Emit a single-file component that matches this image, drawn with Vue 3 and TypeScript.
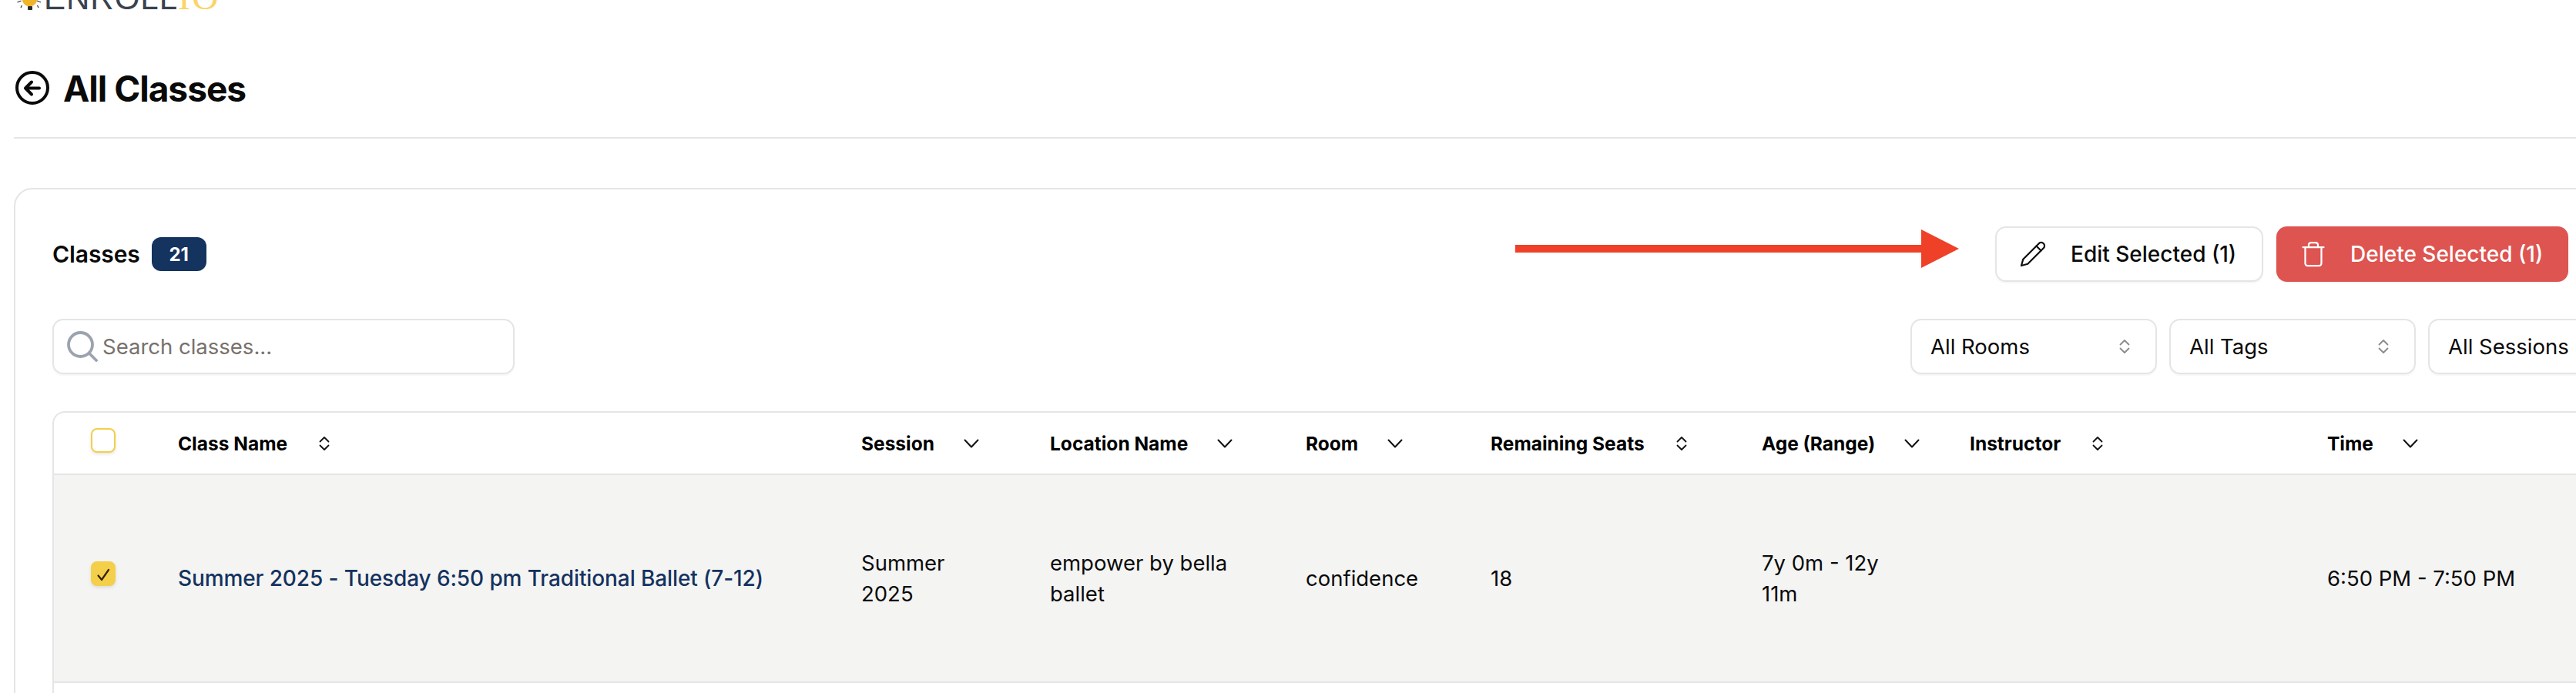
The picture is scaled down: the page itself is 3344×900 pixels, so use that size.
<script setup lang="ts">
interface Column {
  label: string
  sort: 'both' | 'down'
  width: number
}

const columns: Column[] = [
  { label: 'Class Name', sort: 'both', width: 887 },
  { label: 'Session', sort: 'down', width: 245 },
  { label: 'Location Name', sort: 'down', width: 332 },
  { label: 'Room', sort: 'down', width: 240 },
  { label: 'Remaining Seats', sort: 'both', width: 352 },
  { label: 'Age (Range)', sort: 'down', width: 270 },
  { label: 'Instructor', sort: 'both', width: 464 },
  { label: 'Time', sort: 'down', width: 300 },
]

const row = [
  'Summer 2025 - Tuesday 6:50 pm Traditional Ballet (7-12)',
  'Summer 2025',
  'empower by bella ballet',
  'confidence',
  '18',
  '7y 0m - 12y 11m',
  '',
  '6:50 PM - 7:50 PM',
]

const filters = ['All Rooms', 'All Tags', 'All Sessions']
</script>

<template>
  <div class="page">
    <div class="logo">
      <svg class="bulb" width="32" height="14" viewBox="0 0 32 14">
        <path d="M7 0h19c0 3-3 7-7 8h-5C10 7 7 3 7 0z" fill="#f0b429" />
        <path d="M0.500 3l5-2M31 3l-5-2M5 10l1.500-3M28 10l-1.500-3" stroke="#333" stroke-width="1.200" fill="none" />
        <rect x="14" y="8" width="6" height="5" rx="1" fill="#2c2c2c" />
      </svg>
      <span class="logo-text">ENROLL<span class="logo-accent">IO</span></span>
    </div>

    <header class="title-row">
      <svg class="back" width="44" height="44" viewBox="0 0 44 44" fill="none" stroke="#0a0a0a" stroke-width="4" stroke-linecap="round" stroke-linejoin="round">
        <circle cx="22" cy="22" r="20" />
        <path d="M21 14.500L13 22.500l8 8M13.500 22.500h17.500" />
      </svg>
      <h1>All Classes</h1>
    </header>

    <svg class="arrow" width="576" height="50" viewBox="0 0 576 50">
      <rect x="0" y="20" width="528" height="10" fill="#ee4127" />
      <polygon points="527,0 576,25 527,50" fill="#ee4127" />
    </svg>

    <main class="card">
      <div class="card-head">
        <div class="card-title">
          <span class="name">Classes</span>
          <span class="badge">21</span>
        </div>
        <div class="actions">
          <button class="btn edit">
            <svg width="36" height="36" viewBox="0 0 24 24" fill="none" stroke="#111" stroke-width="1.500" stroke-linejoin="round" stroke-linecap="round">
              <path d="M17 3a2.850 2.830 0 1 1 4 4L7.500 20.500 2 22l1.500-5.500Z" />
              <path d="m15 5 4 4" />
            </svg>
            <span>Edit Selected (1)</span>
          </button>
          <button class="btn del">
            <svg width="36" height="36" viewBox="0 0 24 24" fill="none" stroke="#fff" stroke-width="1.500" stroke-linejoin="round" stroke-linecap="round">
              <path d="M3 6h18M19 6v14a2 2 0 0 1-2 2H7a2 2 0 0 1-2-2V6M8 6V4a2 2 0 0 1 2-2h4a2 2 0 0 1 2 2v2" />
            </svg>
            <span>Delete Selected (1)</span>
          </button>
        </div>
      </div>

      <div class="filters-row">
        <label class="search">
          <svg width="40" height="40" viewBox="0 0 40 40" fill="none" stroke="#9ca3af" stroke-width="3.800" stroke-linecap="round">
            <circle cx="17.500" cy="17.500" r="15.500" />
            <path d="M29 29l9 9" />
          </svg>
          <input type="text" placeholder="Search classes..." />
        </label>
        <div class="filters">
          <div v-for="f in filters" :key="f" class="select">
            <span>{{ f }}</span>
            <svg width="14" height="22" viewBox="0 0 14 22" fill="none" stroke="#8a8a8a" stroke-width="1.800" stroke-linecap="round" stroke-linejoin="round">
              <path d="M1.500 8.500L7 3l5.500 5.500M1.500 13.500L7 19l5.500-5.500" />
            </svg>
          </div>
        </div>
      </div>

      <div class="table">
        <div class="tr head">
          <div class="check-cell"><span class="check"></span></div>
          <div v-for="c in columns" :key="c.label" class="th" :style="{ width: c.width + 'px' }">
            <span>{{ c.label }}</span>
            <svg v-if="c.sort === 'both'" class="sort-both" width="14" height="22" viewBox="0 0 14 22" fill="none" stroke="#111" stroke-width="1.800" stroke-linecap="round" stroke-linejoin="round">
              <path d="M1.500 8.500L7 3l5.500 5.500M1.500 13.500L7 19l5.500-5.500" />
            </svg>
            <svg v-else class="sort-down" width="22" height="14" viewBox="0 0 22 14" fill="none" stroke="#111" stroke-width="2" stroke-linecap="round" stroke-linejoin="round">
              <path d="M2.500 2.500l8.500 9 8.500-9" />
            </svg>
          </div>
        </div>
        <div class="tr body">
          <div class="check-cell">
            <span class="check on">
              <svg width="20" height="20" viewBox="0 0 20 20" fill="none" stroke="#33210d" stroke-width="2.200" stroke-linecap="round" stroke-linejoin="round">
                <path d="M3.500 12.500L8 18 17 5" />
              </svg>
            </span>
          </div>
          <div v-for="(cell, i) in row" :key="i" class="td" :class="{ link: i === 0 }" :style="{ width: columns[i].width + 'px' }">
            <span class="cell-text" :class="'cell-' + i">{{ cell }}</span>
          </div>
        </div>
        <div class="rest"></div>
      </div>
    </main>
  </div>
</template>

<style>
html, body { margin: 0; background: #fff; overflow: hidden; }
</style>

<style scoped>
.page {
  position: relative;
  width: 3344px;
  height: 900px;
  overflow: hidden;
  box-sizing: border-box;
  padding-left: 18px;
  font-family: Inter, "Liberation Sans", sans-serif;
  color: #0a0a0a;
  background: #fff;
}
.logo {
  height: 14px;
  display: flex;
  align-items: flex-end;
  overflow: hidden;
  padding-left: 4px;
  gap: 3px;
}
.bulb { flex: none; }
.logo-text {
  font-family: "Liberation Sans", sans-serif;
  font-size: 42px;
  line-height: 42px;
  letter-spacing: 1px;
  color: #39424e;
  white-space: nowrap;
  margin-bottom: -5px;
}
.logo-accent {
  color: #fbd468;
  font-family: "Liberation Serif", serif;
  font-size: 48px;
  letter-spacing: 2px;
}
.title-row {
  margin-top: 78px;
  height: 86px;
  display: flex;
  align-items: flex-start;
  gap: 18px;
  padding-left: 2px;
  border-bottom: 2px solid #e5e5e5;
}
.back { flex: none; }
.title-row h1 {
  margin: -2px 0 0;
  font-size: 46px;
  line-height: 50px;
  font-weight: 700;
  letter-spacing: -1px;
}
.arrow {
  position: absolute;
  left: 1967px;
  top: 298px;
}
.card {
  margin-top: 64px;
  width: 3400px;
  height: 800px;
  box-sizing: border-box;
  border: 2px solid #e5e5e5;
  border-radius: 24px;
  padding: 0 48px;
}
.card-head {
  height: 168px;
  display: flex;
  align-items: center;
  justify-content: space-between;
  width: 3266px;
}
.card-title { display: flex; align-items: center; gap: 15px; }
.name { font-size: 30px; font-weight: 600; letter-spacing: -0.1px; }
.badge {
  width: 71px;
  height: 44px;
  border-radius: 12px;
  background: #14335f;
  color: #fff;
  font-size: 24px;
  font-weight: 700;
  display: flex;
  align-items: center;
  justify-content: center;
}
.actions { display: flex; align-items: center; gap: 17px; }
.btn {
  height: 72px;
  box-sizing: border-box;
  border-radius: 14px;
  display: flex;
  align-items: center;
  font: inherit;
  font-size: 28px;
  font-weight: 500;
  white-space: nowrap;
}
.btn svg { flex: none; }
.edit {
  width: 348px;
  padding: 0 0 0 29px;
  gap: 31px;
  background: #fff;
  color: #0a0a0a;
  border: 2px solid #e5e5e5;
  box-shadow: 0 2px 2px rgba(0,0,0,.04);
}
.del {
  width: 379px;
  padding: 0 0 0 30px;
  gap: 30px;
  background: #dd5450;
  color: #fff;
  border: 0;
  box-shadow: 0 1px 3px rgba(0,0,0,.06);
}
.filters-row {
  display: flex;
  justify-content: space-between;
  align-items: center;
  width: 3404px;
  height: 72px;
}
.search {
  width: 600px;
  height: 72px;
  box-sizing: border-box;
  border: 2px solid #e5e5e5;
  border-radius: 14px;
  display: flex;
  align-items: center;
  padding: 0 16px 0 17px;
  gap: 6px;
  box-shadow: 0 2px 2px rgba(0,0,0,.04);
}
.search svg { flex: none; }
.search input {
  border: 0;
  outline: 0;
  font: inherit;
  font-size: 27.5px;
  width: 400px;
  padding: 0;
  background: transparent;
}
.search input::placeholder { color: #78716c; opacity: 1; }
.filters { display: flex; gap: 16px; }
.select {
  width: 320px;
  height: 72px;
  box-sizing: border-box;
  border: 2px solid #e5e5e5;
  border-radius: 14px;
  display: flex;
  align-items: center;
  justify-content: space-between;
  padding: 0 33px 0 24px;
  font-size: 27.5px;
  box-shadow: 0 2px 2px rgba(0,0,0,.04);
}
.table {
  margin-top: 48px;
  width: 3400px;
  border: 2px solid #e5e5e5;
  border-bottom: 0;
  border-radius: 16px 16px 0 0;
  box-sizing: border-box;
}
.tr { display: flex; align-items: center; }
.head { height: 79px; border-bottom: 2px solid #e5e5e5; }
.body { height: 268px; background: #f4f4f3; border-bottom: 2px solid #e5e5e5; }
.rest { height: 100px; }
.check-cell { width: 161px; flex: none; padding-left: 48px; box-sizing: border-box; display: flex; }
.head .check-cell { margin-top: -7px; }
.body .check-cell { margin-top: -12px; }
.check {
  width: 32px;
  height: 32px;
  box-sizing: border-box;
  border: 2px solid #f4cf4a;
  border-radius: 8px;
  background: #fff;
  box-shadow: 0 2px 4px rgba(0,0,0,.1);
  display: flex;
  align-items: center;
  justify-content: center;
}
.check.on { background: #f4cf4a; }
.th {
  flex: none;
  box-sizing: border-box;
  display: flex;
  align-items: center;
  font-size: 24.5px;
  font-weight: 700;
  color: #000;
}
.sort-both { margin-left: 41px; }
.sort-down { margin-left: 37px; }
.td {
  flex: none;
  box-sizing: border-box;
  font-size: 27.5px;
  line-height: 40px;
  padding-right: 40px;
  color: #0a0a0a;
}
.link { color: #14335f; font-size: 28px; font-weight: 500; letter-spacing: -0.1px; }
.cell-text { display: block; }
.cell-1 { width: 120px; }
.cell-2 { width: 240px; }
.cell-5 { width: 170px; }
</style>
